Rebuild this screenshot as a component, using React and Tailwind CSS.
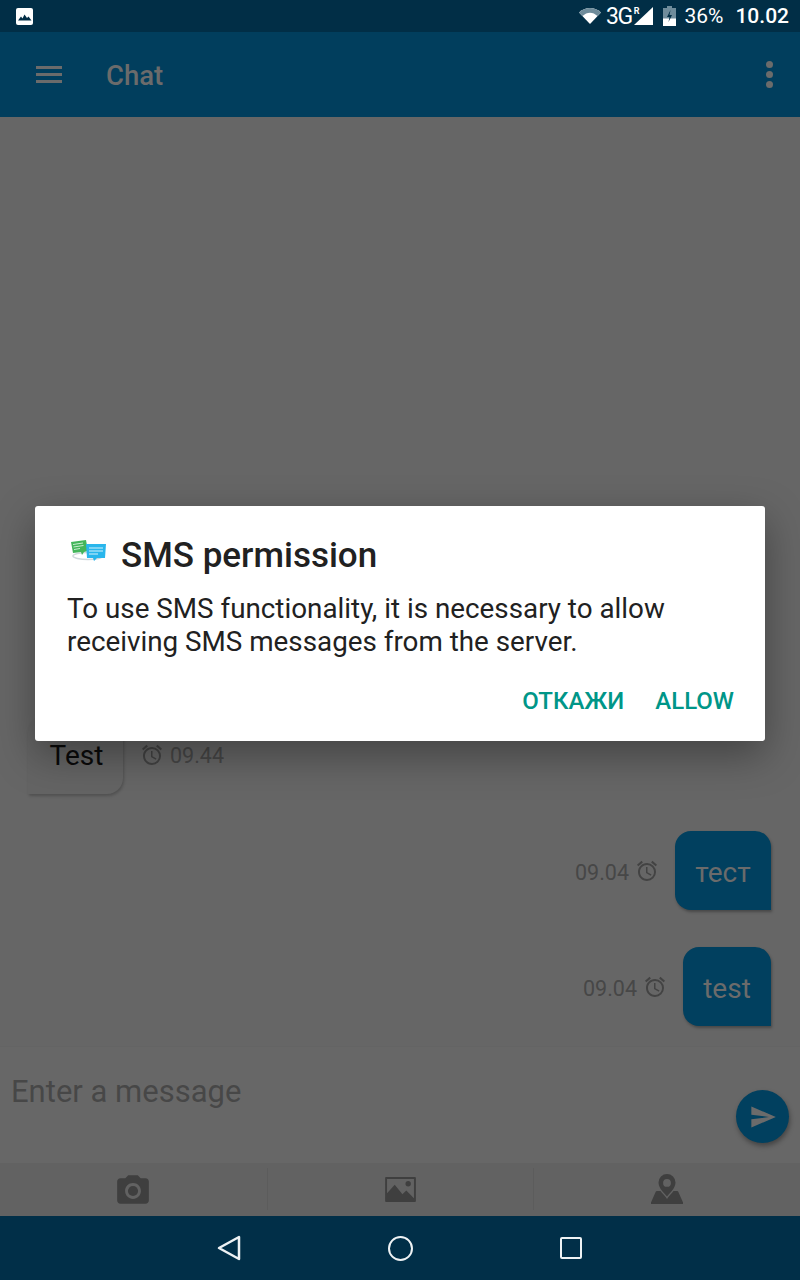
import { MdAccessAlarm, MdPhotoCamera, MdSend } from "react-icons/md";

const roboto = { fontFamily: "Roboto, sans-serif" };

const ImageIcon = ({ className }) => (
  <svg viewBox="0 0 32 26" className={className} fill="currentColor">
    <path d="M1 0h30a1 1 0 0 1 1 1v24a1 1 0 0 1-1 1H1a1 1 0 0 1-1-1V1a1 1 0 0 1 1-1zm1 2v15l8-9 8 10 4-4 8 8V2H2z" fillRule="evenodd" />
    <circle cx="24" cy="7" r="2.8" />
  </svg>
);

const MapPinIcon = ({ className }) => (
  <svg viewBox="0 0 32 30" className={className} fill="currentColor">
    <path d="M16 0a8.500 8.500 0 0 0-8.500 8.500C7.500 14 13 19 16 22.500 19 19 24.500 14 24.500 8.500A8.500 8.500 0 0 0 16 0zm0 5a3.900 3.900 0 1 1 0 7.800A3.900 3.900 0 0 1 16 5z" fillRule="evenodd" />
    <path d="M6 17h3.500c2 2.500 4.500 5 6.500 8 2-3 4.500-5.500 6.500-8H26a1.500 1.500 0 0 1 1.400 1l4.400 10a1 1 0 0 1-1 2H1.200a1 1 0 0 1-1-2L4.600 18A1.500 1.500 0 0 1 6 17z" />
  </svg>
);

const SmsIcon = () => (
  <svg viewBox="0 0 38 24" className="h-[24px] w-[38px]">
    <ellipse cx="18" cy="17" rx="15" ry="3.500" fill="none" stroke="#cfd8dc" strokeWidth="1.500" />
    <path d="M1 3l15-2 2 11-4 1-2 3-1-3-8 1z" fill="#43b55a" />
    <path d="M3 5.500l10-1.500M3.500 8l10-1.500M4 10.500l6-1" stroke="#c8efd0" strokeWidth="1" />
    <path d="M16 5h20l-1 14H27l-3 3-1-3h-6z" fill="#29b6ec" />
    <path d="M19 9h14M19 12h14M19 15h9" stroke="#d4f1fc" strokeWidth="1.200" />
  </svg>
);

const StatusBar = () => (
  <div className="flex h-[32px] shrink-0 items-center justify-between bg-[#012e46] pl-[16px] pr-[11px] text-white">
    <svg viewBox="0 0 17 17" className="h-[17px] w-[17px]">
      <rect width="17" height="17" rx="2" fill="#fff" />
      <path d="M2 12.500l3-4 1.500 2 2-4 2.500 3.500 1.500-1.500 3 4z" fill="#012e46" />
    </svg>
    <div className="flex items-center">
      <svg viewBox="0 0 22 16" className="h-[16px] w-[22px]">
        <path d="M0 4.500C6-1.500 16-1.500 22 4.500L11 16z" fill="#fff" />
        <path d="M0 4.500C6-1.500 16-1.500 22 4.500L18.500 8C14 3.500 8 3.500 3.500 8z" fill="#6f8c9b" />
      </svg>
      <span className="ml-[5px] text-[23px] leading-none tracking-[-1.500px]" style={roboto}>3G</span>
      <span className="mb-[10px] ml-[2px] text-[9px] font-bold leading-none" style={roboto}>R</span>
      <svg viewBox="0 0 19 18" className="ml-[-5px] h-[18px] w-[19px]">
        <path d="M19 0v18H0z" fill="#fff" />
      </svg>
      <svg viewBox="0 0 13 20" className="ml-[10px] h-[20px] w-[13px]">
        <path d="M4 0h5v2h4v18H0V2h4z" fill="#6f8c9b" />
        <path d="M0 12.500h13V20H0z" fill="#fff" />
        <path d="M7.500 4l-3.500 7h2.500l-1 5 3.500-7H6.500z" fill="#012e46" />
      </svg>
      <span className="ml-[8px] text-[21px] leading-none" style={roboto}>36%</span>
      <span className="ml-[12px] text-[21px] font-medium leading-none" style={roboto}>10.02</span>
    </div>
  </div>
);

const AppBar = () => (
  <div className="flex h-[85px] shrink-0 items-center justify-between bg-[#013e5d] pl-[36px] pr-[27px] text-[#6b6b6b]">
    <div className="flex items-center">
      <div className="flex w-[26px] flex-col gap-[4.500px]">
        <div className="h-[2.500px] bg-[#6b6b6b]" />
        <div className="h-[2.500px] bg-[#6b6b6b]" />
        <div className="h-[2.500px] bg-[#6b6b6b]" />
      </div>
      <span className="ml-[44px] pt-[3px] text-[27.500px] font-medium leading-none" style={roboto}>Chat</span>
    </div>
    <div className="flex flex-col gap-[3px]">
      <div className="h-[7px] w-[7px] rounded-full bg-[#6b6b6b]" />
      <div className="h-[7px] w-[7px] rounded-full bg-[#6b6b6b]" />
      <div className="h-[7px] w-[7px] rounded-full bg-[#6b6b6b]" />
    </div>
  </div>
);

const SentMessage = ({ text, width }) => (
  <div className="flex items-center justify-end">
    <span className="pt-[4px] text-[21.500px] leading-none text-[#474747]" style={roboto}>09.04</span>
    <MdAccessAlarm className="ml-[6px] mr-[16px] text-[24px] text-[#434343]" />
    <div
      className={`flex h-[79px] items-center justify-center rounded-t-[16px] rounded-bl-[16px] bg-[#01405f] pt-[5px] text-[28px] text-[#6b6b6b] shadow-[1px_2px_3px_rgba(0,0,0,0.3)] ${width}`}
      style={roboto}
    >
      {text}
    </div>
  </div>
);

const Messages = () => (
  <div className="flex flex-1 flex-col justify-end gap-[37px] bg-[#666666] pb-[20px] pl-[28px] pr-[29px]">
    <div className="flex items-center">
      <div
        className="flex h-[78px] w-[95px] items-center justify-center rounded-tl-[16px] rounded-tr-[16px] rounded-br-[16px] bg-[#646464] pl-[2px] pt-[2px] text-[28px] text-[#0a0a0a] shadow-[1px_2px_3px_rgba(0,0,0,0.2)]"
        style={roboto}
      >
        Test
      </div>
      <MdAccessAlarm className="ml-[17px] text-[24px] text-[#434343]" />
      <span className="ml-[6px] pt-[2px] text-[21.500px] leading-none text-[#474747]" style={roboto}>09.44</span>
    </div>
    <SentMessage text="тест" width="w-[96px]" />
    <SentMessage text="test" width="w-[88px]" />
  </div>
);

const InputArea = () => (
  <div className="relative h-[117px] shrink-0 border-t border-[#646464] bg-[#676767] pl-[11px] pt-[27px]">
    <span className="text-[31px] leading-[36px] text-[#474747]" style={roboto}>Enter a message</span>
    <div className="absolute left-[736px] top-[43px] flex h-[53px] w-[53px] items-center justify-center rounded-full bg-[#01405f] shadow-[1px_3px_5px_rgba(0,0,0,0.35)]">
      <MdSend className="text-[28px] text-[#6b6b6b]" />
    </div>
  </div>
);

const Tabs = () => (
  <div className="grid h-[53px] shrink-0 grid-cols-3 bg-[#626262] text-[#3f3f3f]">
    <div className="flex items-center justify-center pt-[2px]">
      <MdPhotoCamera className="text-[38px]" />
    </div>
    <div className="mb-[6px] mt-[5px] flex items-center justify-center border-l border-[#5c5c5c]">
      <ImageIcon className="h-[25px] w-[31px]" />
    </div>
    <div className="mb-[6px] mt-[5px] flex items-center justify-center border-l border-[#5c5c5c]">
      <MapPinIcon className="h-[30px] w-[32px]" />
    </div>
  </div>
);

const NavBar = () => (
  <div className="flex h-[64px] shrink-0 items-center justify-center gap-[147px] bg-[#012f48] pr-[1px]">
    <svg viewBox="0 0 24 26" className="h-[26px] w-[24px]">
      <path d="M2 13L22 2v22z" fill="none" stroke="#eef2f4" strokeWidth="2.500" strokeLinejoin="round" />
    </svg>
    <div className="h-[25px] w-[25px] rounded-full border-[2.500px] border-[#eef2f4]" />
    <div className="h-[22px] w-[22px] rounded-[2px] border-[2.500px] border-[#eef2f4]" />
  </div>
);

const PermissionDialog = () => (
  <div className="absolute inset-x-0 bottom-[65px] top-[32px] flex items-center justify-center">
    <div className="flex h-[235px] w-[730px] flex-col rounded-[3px] bg-white pl-[32px] pr-[31px] pt-[29px] shadow-[0_14px_40px_rgba(0,0,0,0.35)]" style={roboto}>
      <div className="flex h-[40px] items-center">
        <div className="ml-[3px] mt-[-8px]">
          <SmsIcon />
        </div>
        <span className="ml-[13px] text-[35px] font-medium leading-none text-[#212121]">SMS permission</span>
      </div>
      <p className="mt-[17px] text-[27.800px] leading-[33px] text-[#212121]">
        To use SMS functionality, it is necessary to allow receiving SMS messages from the server.
      </p>
      <div className="mt-[31px] flex justify-end gap-[31px] text-[24px] font-medium leading-none text-[#009688]">
        <span>ОТКАЖИ</span>
        <span>ALLOW</span>
      </div>
    </div>
  </div>
);

const App = () => {
  return (
    <div className="relative flex h-[1280px] w-[800px] flex-col overflow-hidden">
      <StatusBar />
      <AppBar />
      <Messages />
      <InputArea />
      <Tabs />
      <NavBar />
      <PermissionDialog />
    </div>
  );
};

export default App;
